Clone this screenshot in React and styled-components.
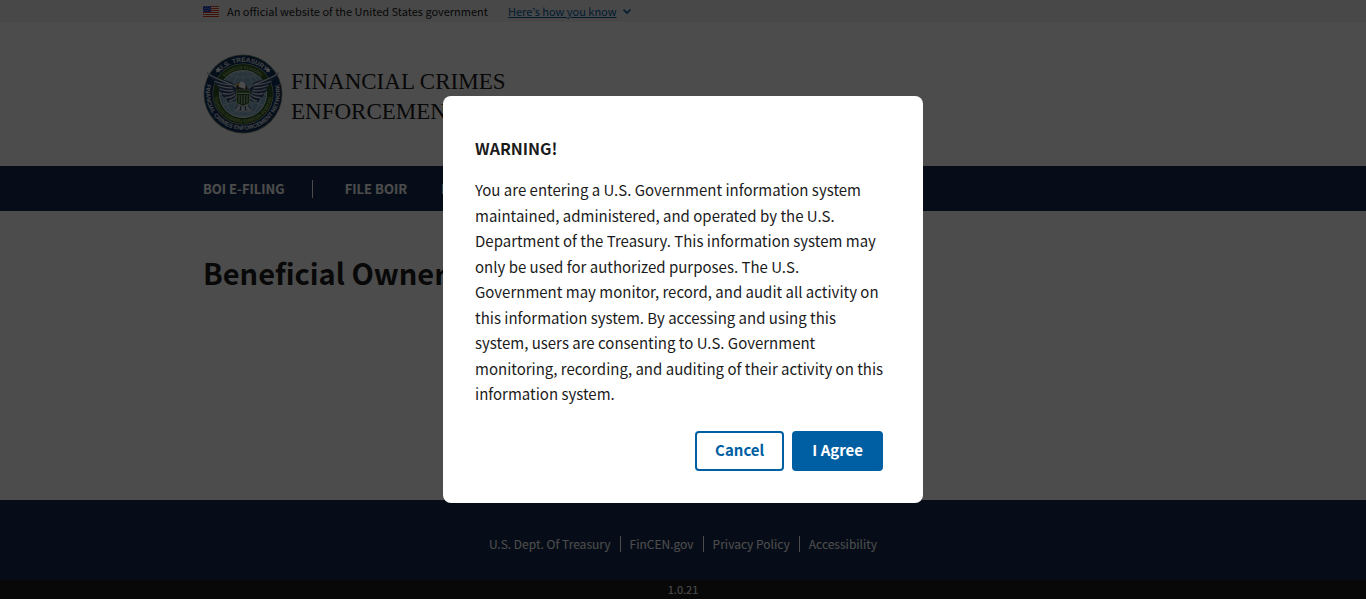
import React from 'react';
import styled, { createGlobalStyle } from 'styled-components';

const sans = '"Noto Sans CJK KR", "Noto Sans", sans-serif';

const GlobalStyle = createGlobalStyle`
  * {
    box-sizing: border-box;
  }
  body {
    margin: 0;
    background-color: #000;
    color: #1b1b1b;
    font-family: ${sans};
    font-size: 15px;
  }
  h1, h2, p, ul {
    margin: 0;
    padding: 0;
  }
  ul {
    list-style: none;
  }
`;

const Page = styled.div`
  display: flex;
  flex-direction: column;
  min-height: 100vh;
  background-color: #fff;
`;

const Container = styled.div`
  width: 100%;
  max-width: 1024px;
  margin: 0 auto;
  padding: 0 32px;
`;

const Banner = styled.section`
  background-color: #f0f0f0;
`;

const BannerRow = styled(Container)`
  display: flex;
  align-items: center;
  height: 22px;
  font-size: 11px;
  line-height: 22px;
  svg {
    flex: none;
  }
`;

const BannerText = styled.p`
  margin: 0 20px 0 8px;
`;

const BannerButton = styled.button`
  display: flex;
  align-items: center;
  gap: 4px;
  padding: 0;
  border: 0;
  background: none;
  color: #005ea2;
  font: inherit;
  cursor: pointer;
  span {
    text-decoration: underline;
  }
`;

const Header = styled(Container)`
  display: flex;
  align-items: center;
  height: 144px;
`;

const Brand = styled.a`
  display: flex;
  align-items: center;
  gap: 8px;
  width: 400px;
  color: #1b1b1b;
  font-family: "Liberation Serif", serif;
  font-size: 23px;
  line-height: 30px;
  text-decoration: none;
  text-transform: uppercase;
  svg {
    flex: none;
  }
`;

const BrandName = styled.span`
  padding-top: 6px;
`;

const Nav = styled.nav`
  background-color: #162e51;
`;

const NavList = styled.ul`
  && {
    display: flex;
    align-items: center;
    width: 100%;
    max-width: 1024px;
    height: 45px;
    margin: 0 auto;
    padding: 0 32px;
  }
`;

const NavItem = styled.li`
  display: flex;
  margin-right: 32px;
  padding-right: ${({ $divided }) => ($divided ? '27px' : '2px')};
  border-right: ${({ $divided }) => ($divided ? '1px solid #fff' : '0')};
`;

const NavLink = styled.a`
  color: #fff;
  font-size: 13px;
  font-weight: 700;
  line-height: 18px;
  text-decoration: none;
  white-space: nowrap;
`;

const Main = styled.main`
  flex: 1;
  width: 100%;
  max-width: 1024px;
  margin: 0 auto;
  padding: 40px 32px 0;
`;

const Title = styled.h1`
  font-size: 29px;
  line-height: 42px;
`;

const Footer = styled.footer`
  background-color: #162e51;
  color: #fff;
`;

const FooterLinks = styled.ul`
  && {
    display: flex;
    align-items: center;
    justify-content: center;
    height: 80px;
    padding-top: 8px;
    font-size: 12px;
    line-height: 16px;
  }
  li + li {
    margin-left: 9px;
    padding-left: 9px;
    border-left: 1px solid #fff;
  }
  a {
    color: #fff;
    text-decoration: none;
  }
`;

const Version = styled.p`
  background-color: #1b1b1b;
  font-size: 11px;
  line-height: 19px;
  text-align: center;
`;

const Overlay = styled.div`
  position: fixed;
  inset: 0;
  display: flex;
  align-items: center;
  justify-content: center;
  background-color: rgba(0, 0, 0, 0.7);
`;

const Modal = styled.div`
  width: 480px;
  max-width: 100%;
  padding: 40px 32px 32px;
  border-radius: 8px;
  background-color: #fff;
`;

const ModalHeading = styled.h2`
  font-size: 16px;
  line-height: 24px;
`;

const ModalText = styled.p`
  margin-top: 17px;
  padding-right: 4px;
  line-height: 1.7;
`;

const ModalFooter = styled.div`
  display: flex;
  justify-content: flex-end;
  gap: 8px;
  margin-top: 24px;
  padding-right: 8px;
`;

const Button = styled.button`
  height: 40px;
  padding: 0 18px 2px;
  border: 2px solid #005ea2;
  border-radius: 4px;
  background-color: ${({ $outline }) => ($outline ? '#fff' : '#005ea2')};
  color: ${({ $outline }) => ($outline ? '#005ea2' : '#fff')};
  font-family: inherit;
  font-size: 15px;
  font-weight: 700;
  line-height: 16px;
  cursor: pointer;
`;

function Flag() {
  return (
    <svg width="16" height="11" viewBox="0 0 16 11" aria-hidden="true">
      <rect width="16" height="11" fill="#fff" />
      {[0, 2, 4, 6, 8, 10].map((y) => (
        <rect key={y} y={y} width="16" height="1" fill="#db3e1f" />
      ))}
      <rect width="8" height="6" fill="#1e33b1" />
      {[1, 3, 5].map((y) => [1, 3, 5, 7].map((x) => (
        <circle key={`${x}-${y}`} cx={x - (y === 3 ? 0 : 0.5) + 0.2} cy={y - 0.2} r="0.5" fill="#fff" />
      )))}
    </svg>
  );
}

function Chevron() {
  return (
    <svg width="12" height="12" viewBox="0 0 12 12" fill="none" stroke="#005ea2" strokeWidth="1.6" aria-hidden="true">
      <path d="M2.5 4.5 6 8l3.5-3.5" />
    </svg>
  );
}

function Wing() {
  return (
    <g>
      <path d="M36 37C33 30 27 27 21 26 14 25 9 22 4 18c1 4 4 7 8 9l-1 1c1 3 3 4 5 5l-1 2c1 2 3 3 4 4v2c1 2 3 3 4 3l1 3c2 2 4 1 5 0l2 1c2-2 4-6 5-11z" fill="#2a4770" />
      <g fill="none" stroke="#d3dce4" strokeLinecap="round" strokeWidth="1.3">
        <path d="M34 34C28 28 17 28 5 19.500" />
        <path d="M28 31c-6-1-10-1-16-3.500M29 34c-5 0-10-1-14-2.500M30 36.500c-4 1-9 0-13-1.500M31 38.500c-3 2-7 2-11 1M32 40.500c-2 2-5 3-9 3M33.500 42c-1 3-3 4-7 5" />
      </g>
    </g>
  );
}

function Seal() {
  return (
    <svg width="80" height="80" viewBox="0 0 80 80" role="img" aria-label="FinCEN seal">
      <defs>
        <path id="ringTop" d="M8 40a32 32 0 0 1 64 0" />
        <path id="ringBottom" d="M6.300 23.500A37 37 0 1 0 73.700 23.500" />
        <path id="codeTop" d="M15 40a25 25 0 0 1 50 0" />
        <path id="codeBottom" d="M12 32A29 29 0 1 0 68 32" />
      </defs>
      <circle cx="40" cy="40" r="39.500" fill="#8f9c86" />
      <circle cx="40" cy="40" r="38.700" fill="#12335f" />
      <circle cx="40" cy="40" r="30.500" fill="#c4cdb8" />
      <circle cx="40" cy="40" r="30" fill="#2d5826" />
      <circle cx="40" cy="40" r="24" fill="#e4ecf0" />
      <circle cx="40" cy="40" r="23.300" fill="#83aac6" />
      <g fill="none" stroke="#c3d6e2" strokeWidth="0.700">
        <ellipse cx="40" cy="40" rx="10" ry="23" />
        <ellipse cx="40" cy="40" rx="18" ry="23" />
        <path d="M40 17v46M17 40h46M20 29q20 7 40 0M20 51q20-7 40 0M27 21q13 5 26 0M27 59q13-5 26 0" />
      </g>
      <g fill="#e3e7ea" fontFamily="Liberation Sans, sans-serif" fontWeight="700" textAnchor="middle">
        <text fontSize="6.500">
          <textPath href="#ringTop" startOffset="50%">U.S. TREASURY</textPath>
        </text>
        <text fontSize="5.800">
          <textPath href="#ringBottom" startOffset="50%">FINANCIAL CRIMES ENFORCEMENT NETWORK</textPath>
        </text>
        <text fontSize="4.500" fill="#a9bf72">
          <textPath href="#codeTop" startOffset="50%">01000110 01101001</textPath>
        </text>
        <text fontSize="4.500" fill="#a9bf72">
          <textPath href="#codeBottom" startOffset="50%">01101110 01000011 01000101 01001110</textPath>
        </text>
      </g>
      <path d="M15 13l.9 1.900 2 .2-1.500 1.400.5 2-1.900-1-1.900 1 .5-2-1.500-1.400 2-.2zM65 13l.9 1.900 2 .2-1.500 1.400.5 2-1.900-1-1.900 1 .5-2-1.500-1.400 2-.2z" fill="#fff" />
      <Wing />
      <g transform="translate(80 0) scale(-1 1)">
        <Wing />
      </g>
      <path d="M35 50l-5 6 3-1-1 3 4-2v3l4-2 4 2v-3l4 2-1-3 3 1-5-6z" fill="#c9d3da" />
      <path d="M35 51l-3 4M38 52l-1 5M42 52l1 5M45 51l3 4" stroke="#1d3a63" />
      <path d="M33 36c0-5 2-8 6-8 3 0 5 3 6 8z" fill="#3d3a35" />
      <path d="M36 33c-1-4 1-6 4-5 3 1 3 4 2 7z" fill="#fff" />
      <path d="M37 29l-4 1-1 2 4-1z" fill="#e0a63a" />
      <path d="M33.500 39.500h13v9.500c-3 1.500-4 2-6.500 3-2.500-1-3.500-1.500-6.500-3z" fill="#2d5826" stroke="#cfdcc4" strokeWidth="0.600" />
      <path d="M33 36h14v3H33z" fill="#2d5826" stroke="#cfdcc4" strokeWidth="0.600" />
      <path d="M36 41v8M38.700 41v9M41.300 41v9M44 41v8" stroke="#cfdcc4" strokeWidth="0.900" />
    </svg>
  );
}

const navItems = ['BOI E-FILING', 'FILE BOIR', 'HELP'];
const footerLinks = ['U.S. Dept. Of Treasury', 'FinCEN.gov', 'Privacy Policy', 'Accessibility'];

export default function App() {
  return (
    <>
      <GlobalStyle />
      <Page>
        <Banner aria-label="Official website of the United States government">
          <BannerRow>
            <Flag />
            <BannerText>An official website of the United States government</BannerText>
            <BannerButton type="button">
              <span>Here’s how you know</span>
              <Chevron />
            </BannerButton>
          </BannerRow>
        </Banner>
        <header>
          <Header>
            <Brand href="#home">
              <Seal />
              <BrandName>
                Financial Crimes
                <br />
                Enforcement Network
              </BrandName>
            </Brand>
          </Header>
          <Nav>
            <NavList>
              {navItems.map((item, i) => (
                <NavItem key={item} $divided={i === 0}>
                  <NavLink href="#nav">{item}</NavLink>
                </NavItem>
              ))}
            </NavList>
          </Nav>
        </header>
        <Main>
          <Title>Beneficial Ownership Information</Title>
        </Main>
        <Footer>
          <FooterLinks>
            {footerLinks.map((link) => (
              <li key={link}>
                <a href="#footer">{link}</a>
              </li>
            ))}
          </FooterLinks>
          <Version>1.0.21</Version>
        </Footer>
      </Page>
      <Overlay>
        <Modal role="dialog" aria-modal="true" aria-labelledby="warning-heading">
          <ModalHeading id="warning-heading">WARNING!</ModalHeading>
          <ModalText>
            You are entering a U.S. Government information system maintained, administered,
            and operated by the U.S. Department of the Treasury. This information system may
            only be used for authorized purposes. The U.S. Government may monitor, record,
            and audit all activity on this information system. By accessing and using this
            system, users are consenting to U.S. Government monitoring, recording, and
            auditing of their activity on this information system.
          </ModalText>
          <ModalFooter>
            <Button type="button" $outline>Cancel</Button>
            <Button type="button">I Agree</Button>
          </ModalFooter>
        </Modal>
      </Overlay>
    </>
  );
}
